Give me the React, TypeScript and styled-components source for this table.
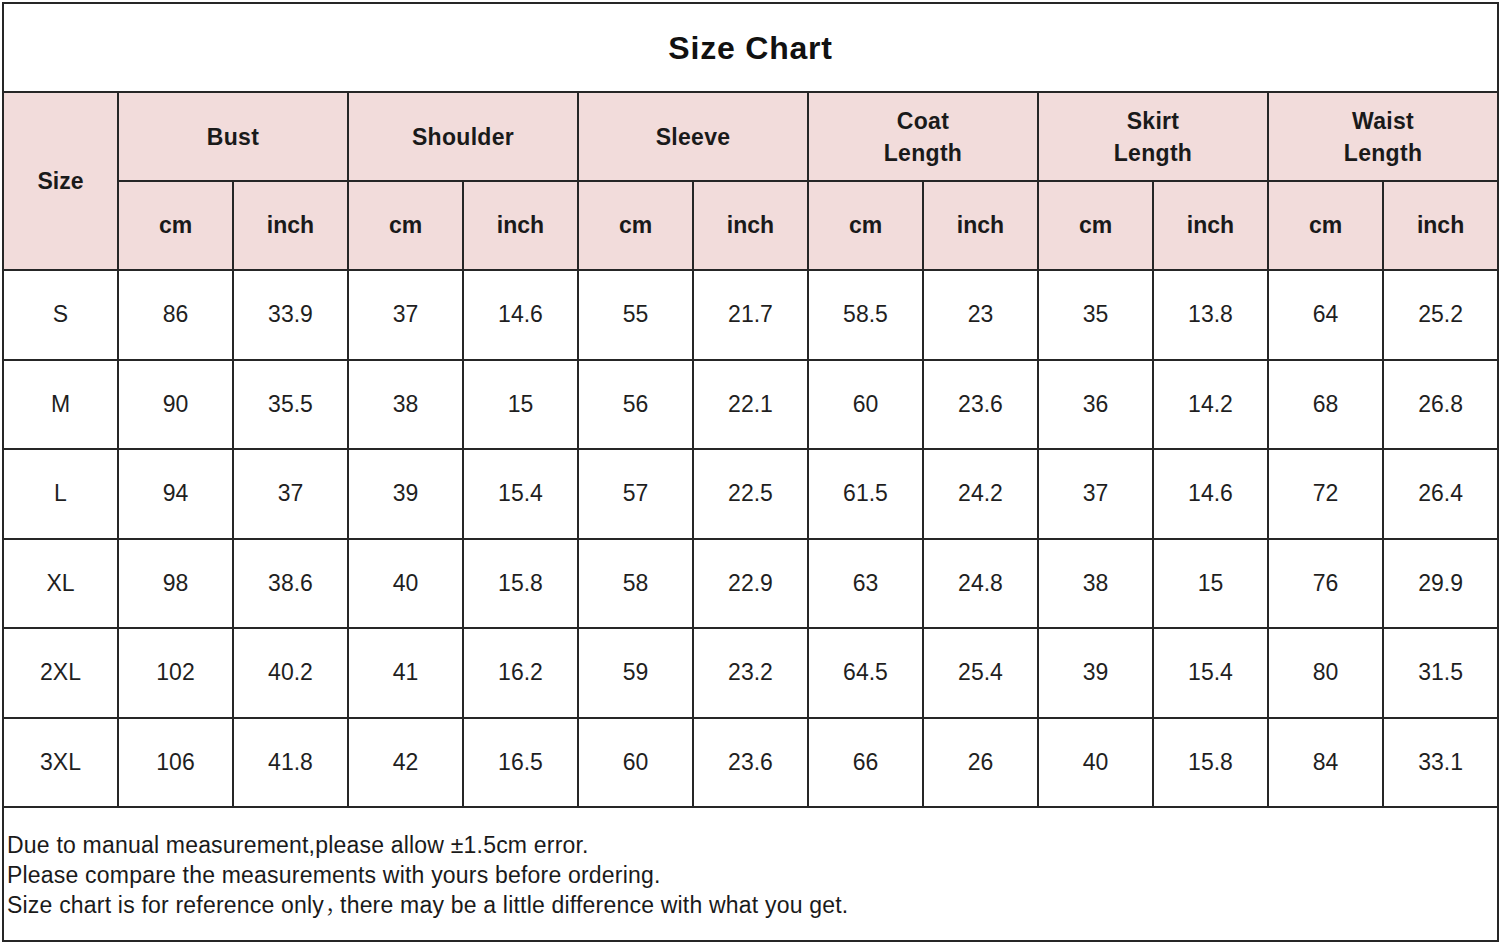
import React from "react";
import styled, { createGlobalStyle } from "styled-components";

const GlobalStyle = createGlobalStyle`
  html, body {
    margin: 0;
    padding: 0;
    background: #fff;
  }
  body {
    font-family: "Liberation Sans", Arial, sans-serif;
    color: #1c1c1c;
  }
`;

const measures = [
  { name: "Bust", lines: ["Bust"] },
  { name: "Shoulder", lines: ["Shoulder"] },
  { name: "Sleeve", lines: ["Sleeve"] },
  { name: "Coat Length", lines: ["Coat", "Length"] },
  { name: "Skirt Length", lines: ["Skirt", "Length"] },
  { name: "Waist Length", lines: ["Waist", "Length"] },
];

const rows: [string, ...string[]][] = [
  ["S", "86", "33.9", "37", "14.6", "55", "21.7", "58.5", "23", "35", "13.8", "64", "25.2"],
  ["M", "90", "35.5", "38", "15", "56", "22.1", "60", "23.6", "36", "14.2", "68", "26.8"],
  ["L", "94", "37", "39", "15.4", "57", "22.5", "61.5", "24.2", "37", "14.6", "72", "26.4"],
  ["XL", "98", "38.6", "40", "15.8", "58", "22.9", "63", "24.8", "38", "15", "76", "29.9"],
  ["2XL", "102", "40.2", "41", "16.2", "59", "23.2", "64.5", "25.4", "39", "15.4", "80", "31.5"],
  ["3XL", "106", "41.8", "42", "16.5", "60", "23.6", "66", "26", "40", "15.8", "84", "33.1"],
];

const SizeChart: React.FC = () => {
  return (
    <Page>
      <GlobalStyle />
      <Table>
        <colgroup>
          {Array.from({ length: 13 }).map((_, i) => (
            <col key={i} />
          ))}
        </colgroup>
        <thead>
          <TitleRow>
            <TitleCell colSpan={13}>Size Chart</TitleCell>
          </TitleRow>
          <HeadRow>
            <HeadCell rowSpan={2}>Size</HeadCell>
            {measures.map((m) => (
              <HeadCell key={m.name} colSpan={2}>
                {m.lines.map((l) => (
                  <HeadLine key={l}>{l}</HeadLine>
                ))}
              </HeadCell>
            ))}
          </HeadRow>
          <HeadRow>
            {measures.map((m) => (
              <React.Fragment key={m.name}>
                <HeadCell>cm</HeadCell>
                <HeadCell>inch</HeadCell>
              </React.Fragment>
            ))}
          </HeadRow>
        </thead>
        <tbody>
          {rows.map((r) => (
            <DataRow key={r[0]}>
              {r.map((v, i) => (
                <DataCell key={i}>{v}</DataCell>
              ))}
            </DataRow>
          ))}
          <tr>
            <NoteCell colSpan={13}>
              <NoteLine>Due to manual measurement,please allow ±1.5cm error.</NoteLine>
              <NoteLine>Please compare the measurements with yours before ordering.</NoteLine>
              <NoteLine>
                Size chart is for reference only<Comma>，</Comma>there may be a little
                difference with what you get.
              </NoteLine>
            </NoteCell>
          </tr>
        </tbody>
      </Table>
    </Page>
  );
};

const Page = styled.div`
  padding: 2px 0 0 2px;
  width: 1500px;
  box-sizing: border-box;
`;

const Table = styled.table`
  border-collapse: collapse;
  table-layout: fixed;
  width: 1495px;
  border: 2px solid #262626;

  col {
    width: 115px;
  }
`;

const TitleRow = styled.tr`
  height: 89px;
`;

const TitleCell = styled.th`
  font-size: 32px;
  font-weight: 700;
  color: #111;
  text-align: center;
  vertical-align: top;
  padding-top: 26px;
  letter-spacing: 0.8px;
  border: 2px solid #262626;
`;

const HeadRow = styled.tr`
  height: 89px;
`;

const HeadCell = styled.th`
  background: #f2dcdb;
  border: 2px solid #262626;
  font-size: 23px;
  font-weight: 700;
  color: #1a1a1a;
  text-align: center;
  vertical-align: middle;
  padding: 0;
`;

const HeadLine = styled.div`
  line-height: 32px;
  letter-spacing: 0.3px;
`;

const DataRow = styled.tr`
  height: 89.5px;
`;

const DataCell = styled.td`
  border: 2px solid #262626;
  font-size: 23px;
  color: #1f1f1f;
  text-align: center;
  vertical-align: middle;
  padding: 0;
`;

const NoteCell = styled.td`
  border: 2px solid #262626;
  height: 130px;
  padding: 2px 0 0 3px;
  vertical-align: middle;
  font-size: 23px;
  letter-spacing: 0.2px;
  color: #1a1a1a;
`;

const NoteLine = styled.div`
  line-height: 30px;
  white-space: nowrap;
`;

const Comma = styled.span`
  font-family: "Noto Sans CJK SC", sans-serif;
  font-weight: 300;
  line-height: 0;
  letter-spacing: -8px;
  margin-left: 1px;
`;

export default SizeChart;
